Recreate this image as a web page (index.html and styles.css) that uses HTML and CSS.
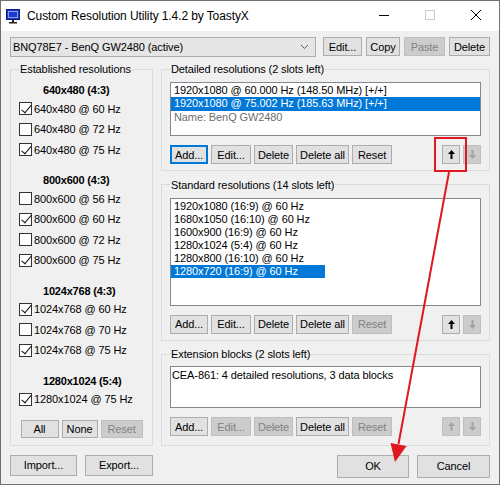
FILE: index.html
```html
<!DOCTYPE html>
<html lang="en">
<head>
<meta charset="utf-8">
<title>Custom Resolution Utility 1.4.2 by ToastyX</title>
<link rel="stylesheet" href="styles.css">
</head>
<body>
<div class="window">
  <header class="titlebar">
    <svg class="app-icon" width="14" height="15" viewBox="0 0 14 15">
      <rect x="0.5" y="0.5" width="13" height="10" fill="#1a3ad6" stroke="#0b1c78"/>
      <rect x="2.5" y="2.5" width="9" height="6" fill="none" stroke="#ffffff" stroke-dasharray="1 1"/>
      <rect x="6" y="11" width="2" height="2" fill="#222"/>
      <rect x="3" y="13" width="8" height="1.5" fill="#222"/>
    </svg>
    <span class="title">Custom Resolution Utility 1.4.2 by ToastyX</span>
    <div class="caption">
      <span class="cap"><svg width="10" height="10" viewBox="0 0 10 10"><path d="M0 5.5H10" stroke="#000"/></svg></span>
      <span class="cap"><svg width="10" height="10" viewBox="0 0 10 10"><rect x="0.5" y="0.5" width="9" height="9" fill="none" stroke="#cccccc"/></svg></span>
      <span class="cap"><svg width="10" height="10" viewBox="0 0 10 10"><path d="M0 0L10 10M10 0L0 10" stroke="#000"/></svg></span>
    </div>
  </header>

  <main class="client">
    <div class="toprow">
      <div class="combo">
        <span class="combo-text">BNQ78E7 - BenQ GW2480 (active)</span>
        <svg class="chev" width="7" height="4" viewBox="0 0 7 4"><path d="M0 0L3.5 3.5L7 0" fill="none" stroke="#606060"/></svg>
      </div>
      <button class="btn w39">Edit...</button>
      <button class="btn w34">Copy</button>
      <button class="btn w41" disabled>Paste</button>
      <button class="btn w41">Delete</button>
    </div>

    <div class="panels">
      <fieldset class="group est">
        <legend>Established resolutions</legend>
        <div class="hdr first">640x480 (4:3)</div>
        <div class="chk"><span class="box on"></span>640x480 @ 60 Hz</div>
        <div class="chk"><span class="box"></span>640x480 @ 72 Hz</div>
        <div class="chk"><span class="box on"></span>640x480 @ 75 Hz</div>
        <div class="hdr">800x600 (4:3)</div>
        <div class="chk"><span class="box"></span>800x600 @ 56 Hz</div>
        <div class="chk"><span class="box on"></span>800x600 @ 60 Hz</div>
        <div class="chk"><span class="box"></span>800x600 @ 72 Hz</div>
        <div class="chk"><span class="box on"></span>800x600 @ 75 Hz</div>
        <div class="hdr">1024x768 (4:3)</div>
        <div class="chk"><span class="box on"></span>1024x768 @ 60 Hz</div>
        <div class="chk"><span class="box"></span>1024x768 @ 70 Hz</div>
        <div class="chk"><span class="box on"></span>1024x768 @ 75 Hz</div>
        <div class="hdr">1280x1024 (5:4)</div>
        <div class="chk"><span class="box on"></span>1280x1024 @ 75 Hz</div>
        <div class="est-buttons">
          <button class="btn small w38">All</button>
          <button class="btn small w36">None</button>
          <button class="btn small w42" disabled>Reset</button>
        </div>
      </fieldset>

      <div class="rightcol">
        <fieldset class="group">
          <legend>Detailed resolutions (2 slots left)</legend>
          <div class="listbox detailed">
            <div class="row">1920x1080 @ 60.000 Hz (148.50 MHz) [+/+]</div>
            <div class="row sel">1920x1080 @ 75.002 Hz (185.63 MHz) [+/+]</div>
            <div class="row muted">Name: BenQ GW2480</div>
          </div>
          <div class="btnrow">
            <button class="btn w38 focus">Add...</button>
            <button class="btn w40">Edit...</button>
            <button class="btn w39">Delete</button>
            <button class="btn w53">Delete all</button>
            <button class="btn w40">Reset</button>
            <div class="arrows">
              <button class="btn arrow" aria-label="Move up"><svg width="7" height="9" viewBox="0 0 7 9"><path d="M3.5 0L7 4H4.5V9H2.5V4H0Z" fill="#000"/></svg></button>
              <button class="btn arrow" disabled aria-label="Move down"><svg width="7" height="9" viewBox="0 0 7 9"><path d="M3.5 9L7 5H4.5V0H2.5V5H0Z" fill="#a3a3a3"/></svg></button>
            </div>
          </div>
        </fieldset>

        <fieldset class="group">
          <legend>Standard resolutions (14 slots left)</legend>
          <div class="listbox standard">
            <div class="row">1920x1080 (16:9) @ 60 Hz</div>
            <div class="row">1680x1050 (16:10) @ 60 Hz</div>
            <div class="row">1600x900 (16:9) @ 60 Hz</div>
            <div class="row">1280x1024 (5:4) @ 60 Hz</div>
            <div class="row">1280x800 (16:10) @ 60 Hz</div>
            <div class="row sel">1280x720 (16:9) @ 60 Hz</div>
          </div>
          <div class="btnrow">
            <button class="btn w38">Add...</button>
            <button class="btn w40">Edit...</button>
            <button class="btn w39">Delete</button>
            <button class="btn w53">Delete all</button>
            <button class="btn w40" disabled>Reset</button>
            <div class="arrows">
              <button class="btn arrow" aria-label="Move up"><svg width="7" height="9" viewBox="0 0 7 9"><path d="M3.5 0L7 4H4.5V9H2.5V4H0Z" fill="#000"/></svg></button>
              <button class="btn arrow" disabled aria-label="Move down"><svg width="7" height="9" viewBox="0 0 7 9"><path d="M3.5 9L7 5H4.5V0H2.5V5H0Z" fill="#a3a3a3"/></svg></button>
            </div>
          </div>
        </fieldset>

        <fieldset class="group ext">
          <legend>Extension blocks (2 slots left)</legend>
          <div class="listbox extension">
            <div class="row">CEA-861: 4 detailed resolutions, 3 data blocks</div>
          </div>
          <div class="btnrow">
            <button class="btn w38">Add...</button>
            <button class="btn w40" disabled>Edit...</button>
            <button class="btn w39" disabled>Delete</button>
            <button class="btn w53">Delete all</button>
            <button class="btn w40" disabled>Reset</button>
            <div class="arrows">
              <button class="btn arrow" disabled aria-label="Move up"><svg width="7" height="9" viewBox="0 0 7 9"><path d="M3.5 0L7 4H4.5V9H2.5V4H0Z" fill="#a3a3a3"/></svg></button>
              <button class="btn arrow" disabled aria-label="Move down"><svg width="7" height="9" viewBox="0 0 7 9"><path d="M3.5 9L7 5H4.5V0H2.5V5H0Z" fill="#a3a3a3"/></svg></button>
            </div>
          </div>
        </fieldset>
      </div>
    </div>

    <div class="bottomrow">
      <button class="btn w67 low">Import...</button>
      <button class="btn w68 low">Export...</button>
      <button class="btn w72 tall push">OK</button>
      <button class="btn w73 tall">Cancel</button>
    </div>
  </main>
</div>

<svg class="annot" width="500" height="485" viewBox="0 0 500 485" aria-hidden="true">
  <rect x="435" y="138" width="31" height="33" fill="none" stroke="#e0181f" stroke-width="2"/>
  <path d="M449 172L398.5 444" stroke="#e0181f" stroke-width="2" fill="none"/>
  <path d="M395 462L406.5 446L390.5 443Z" fill="#e0181f"/>
</svg>
</body>
</html>
```

FILE: styles.css
```css
* { box-sizing: border-box; }

html, body {
  margin: 0;
  padding: 0;
}

body {
  position: relative;
  width: 500px;
  height: 485px;
  overflow: hidden;
  background: #f0f0f0;
  font-family: "Liberation Sans", Arial, sans-serif;
  font-size: 11px;
  letter-spacing: -0.1px;
  color: #000;
}

.window {
  width: 500px;
  height: 485px;
  border: 1px solid #707070;
  background: #f0f0f0;
  display: flex;
  flex-direction: column;
}

/* ---------- title bar ---------- */
.titlebar {
  height: 30px;
  flex-shrink: 0;
  background: #ffffff;
  display: flex;
  align-items: center;
  padding-left: 5px;
}

.app-icon { margin-right: 7px; flex-shrink: 0; }

.title {
  flex: 1;
  font-size: 12px;
  white-space: nowrap;
}

.caption {
  display: flex;
  align-self: stretch;
}

.cap {
  width: 46px;
  display: flex;
  align-items: center;
  justify-content: center;
  padding-bottom: 2px;
}

/* ---------- client area ---------- */
.client {
  flex: 1;
  display: flex;
  flex-direction: column;
  padding: 6px 9px 0 9px;
}

.toprow {
  display: flex;
  align-items: flex-start;
  height: 20px;
  gap: 4px;
}

.combo {
  width: 306px;
  height: 20px;
  margin-right: 3px;
  background: #e5e5e5;
  border: 1px solid #acacac;
  display: flex;
  align-items: center;
  padding: 0 7px 0 2px;
}

.combo-text { flex: 1; white-space: nowrap; }

.toprow .btn { height: 19px; }

/* ---------- buttons ---------- */
.btn {
  font: inherit;
  letter-spacing: inherit;
  color: #000;
  background: #e1e1e1;
  border: 1px solid #adadad;
  height: 19px;
  padding: 0;
  margin: 0;
  display: inline-flex;
  align-items: center;
  justify-content: center;
  white-space: nowrap;
  flex-shrink: 0;
}

.btn:disabled {
  background: #cccccc;
  border-color: #bfbfbf;
  color: #838383;
}

.btn.focus {
  border-color: #0078d7;
  box-shadow: inset 0 0 0 1px #0078d7;
}

.btn.small { height: 18px; }
.btn.low { height: 21px; }
.btn.tall { height: 23px; }
.btn.arrow { width: 18px; }

.w34 { width: 34px; }
.w36 { width: 36px; }
.w38 { width: 38px; }
.w39 { width: 39px; }
.w40 { width: 40px; }
.w41 { width: 41px; }
.w42 { width: 42px; }
.w53 { width: 53px; }
.w67 { width: 67px; }
.w68 { width: 68px; }
.w72 { width: 72px; }
.w73 { width: 73px; }

/* ---------- group boxes ---------- */
.panels {
  display: flex;
  gap: 8px;
  margin-top: 5px;
}

.group {
  margin: 0;
  min-width: 0;
  border: 1px solid #dcdcdc;
  padding: 6px 8px 6px 8px;
}

.group legend {
  padding: 0 1px;
  line-height: 14px;
  font-size: 11px;
}

.est {
  width: 143px;
  padding-bottom: 7px;
  display: flex;
  flex-direction: column;
}

.hdr {
  height: 16.5px;
  line-height: 16.5px;
  margin-top: 12px;
  padding-left: 24px;
  font-weight: bold;
  font-size: 11px;
  letter-spacing: -0.2px;
  white-space: nowrap;
}

.hdr.first { margin-top: 0; }

.chk {
  height: 20.5px;
  display: flex;
  align-items: center;
  white-space: nowrap;
}

.box {
  position: relative;
  width: 13px;
  height: 13px;
  border: 1px solid #333333;
  background: #ffffff;
  margin-right: 2px;
  flex-shrink: 0;
}

.box.on::after {
  content: "";
  position: absolute;
  left: 3.5px;
  top: -0.5px;
  width: 4px;
  height: 8.5px;
  border-right: 1px solid #1a1a1a;
  border-bottom: 1px solid #1a1a1a;
  transform: rotate(40deg);
}

.est-buttons {
  display: flex;
  justify-content: center;
  gap: 3px;
  margin-top: 10px;
}

.rightcol {
  width: 329px;
  display: flex;
  flex-direction: column;
  gap: 6.5px;
}

.ext { flex: 1; padding-top: 5px; }

/* ---------- list boxes ---------- */
.listbox {
  background: #ffffff;
  border: 1px solid #828790;
  overflow: hidden;
  white-space: nowrap;
}

.listbox .row { padding-left: 3px; }

.listbox .sel {
  background: #0078d7;
  color: #ffffff;
}

.listbox .muted { color: #6d6d6d; }

.detailed { height: 54px; padding-top: 0.5px; }
.detailed .row { height: 13.5px; line-height: 13.5px; }

.standard { height: 108px; padding-top: 1.5px; }
.standard .row { height: 13px; line-height: 13px; }
.standard .sel { width: 154px; }

.extension { height: 42px; padding-top: 1.5px; }
.extension .row { height: 13px; line-height: 13px; padding-left: 1px; }

.btnrow {
  display: flex;
  gap: 3px;
  margin-top: 9px;
}

.arrows {
  margin-left: auto;
  display: flex;
  gap: 3px;
}

/* ---------- bottom row ---------- */
.bottomrow {
  display: flex;
  align-items: flex-start;
  gap: 8px;
  margin-top: 9px;
}

.push { margin-left: auto; }

/* ---------- annotation overlay ---------- */
.annot {
  position: absolute;
  left: 0;
  top: 0;
  pointer-events: none;
}
```
